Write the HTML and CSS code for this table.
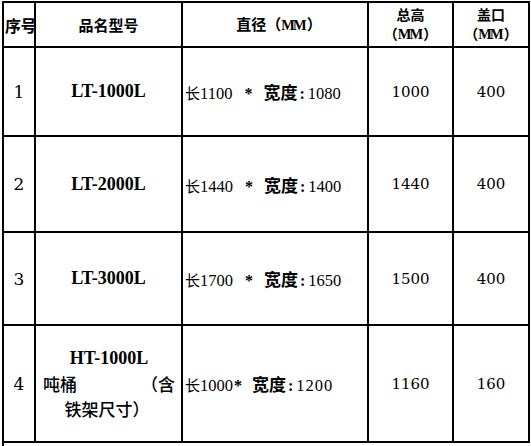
FILE: index.html
```html
<!DOCTYPE html>
<html lang="zh">
<head>
<meta charset="utf-8">
<link rel="stylesheet" href="styles.css">
</head>
<body>
<table class="spec">
  <colgroup>
    <col class="c-no">
    <col class="c-name">
    <col class="c-dim">
    <col class="c-h">
    <col class="c-lid">
  </colgroup>
  <tr class="head">
    <th class="h-no">序号</th>
    <th>品名型号</th>
    <th class="h-dim">直径（<span class="mm">MM</span>）</th>
    <th class="h-two">总高<br>（<span class="mm">MM</span>）</th>
    <th class="h-two">盖口<br>（<span class="mm">MM</span>）</th>
  </tr>
  <tr class="r1">
    <td class="no">1</td>
    <td class="model">LT-1000L</td>
    <td class="dim">长<span class="d">1100</span><span class="star">*</span><span class="b">宽度</span><span class="colon">:</span><span class="d">1080</span></td>
    <td class="num">1000</td>
    <td class="num">400</td>
  </tr>
  <tr class="r2">
    <td class="no">2</td>
    <td class="model">LT-2000L</td>
    <td class="dim">长<span class="d">1440</span><span class="star">*</span><span class="b">宽度</span><span class="colon">:</span><span class="d">1400</span></td>
    <td class="num">1440</td>
    <td class="num">400</td>
  </tr>
  <tr class="r3">
    <td class="no">3</td>
    <td class="model">LT-3000L</td>
    <td class="dim">长<span class="d">1700</span><span class="star">*</span><span class="b">宽度</span><span class="colon">:</span><span class="d">1650</span></td>
    <td class="num">1500</td>
    <td class="num">400</td>
  </tr>
  <tr class="r4">
    <td class="no">4</td>
    <td class="model multi">
      <div class="m-line">HT-1000L</div>
      <div class="m-split"><span>吨桶</span><span>（含</span></div>
      <div class="m-line cjk">铁架尺寸）</div>
    </td>
    <td class="dim">长<span class="d">1000</span><span class="star tight">*</span><span class="b">宽度</span><span class="colon">:</span><span class="d wide">1200</span></td>
    <td class="num">1160</td>
    <td class="num">160</td>
  </tr>
  <tr class="tail">
    <td colspan="5"></td>
  </tr>
</table>
</body>
</html>
```
FILE: styles.css
```css
html, body {
  margin: 0;
  padding: 0;
  background: #ffffff;
}
body {
  width: 531px;
  height: 446px;
  overflow: hidden;
  color: #000;
  font-family: "Liberation Serif", "Noto Sans CJK SC", serif;
}
.spec {
  border-collapse: collapse;
  table-layout: fixed;
  width: 528px;
  margin: 1px 0 0 2px;
}
.c-no { width: 32px; }
.c-name { width: 147px; }
.c-dim { width: 186px; }
.c-h { width: 85px; }
.c-lid { width: 76px; }

.spec th, .spec td {
  border: 2px solid #000;
  padding: 0;
  vertical-align: middle;
  box-sizing: border-box;
}
.head th {
  height: 45px;
  font-family: "Noto Sans CJK SC", sans-serif;
  font-weight: 700;
  font-size: 15px;
  line-height: 18px;
  text-align: center;
}
.head .h-no {
  text-align: left;
  padding-left: 1px;
  white-space: nowrap;
  overflow: hidden;
  font-size: 16px;
  letter-spacing: -0.5px;
}
.head .h-dim {
  padding-left: 8px;
}
.head .h-two {
  font-size: 14px;
  line-height: 19px;
}
.mm {
  font-family: "Liberation Serif", serif;
  font-weight: 700;
  font-size: 14.5px;
  letter-spacing: -2px;
  margin-right: 2px;
}
.r1 td { height: 89px; }
.r2 td { height: 96px; }
.r3 td { height: 93px; }
.r4 td { height: 117px; }
.no {
  text-align: center;
  font-family: "DejaVu Serif", serif;
  font-size: 17px;
}
.model {
  text-align: center;
  font-family: "Liberation Serif", serif;
  font-weight: 700;
  font-size: 18px;
}
.multi {
  padding: 0 6px 0 7px !important;
  line-height: 25px;
}
.m-line { text-align: center; }
.m-split {
  display: flex;
  justify-content: space-between;
  font-family: "Noto Sans CJK SC", sans-serif;
  font-weight: 500;
  font-size: 17px;
}
.cjk {
  font-family: "Noto Sans CJK SC", sans-serif;
  font-weight: 500;
  font-size: 17px;
  padding-right: 4px;
}
.dim {
  padding-left: 2px !important;
  font-family: "Noto Sans CJK SC", sans-serif;
  font-size: 15px;
  white-space: nowrap;
}
.d {
  font-family: "Liberation Serif", serif;
  font-size: 16.5px;
}
.d.wide {
  letter-spacing: 1px;
}
.star {
  font-family: "Liberation Serif", serif;
  font-weight: 700;
  font-size: 16px;
  margin: 0 11px 0 12px;
}
.star.tight {
  margin: 0 10px 0 1px;
}
.colon {
  font-family: "Liberation Serif", serif;
  font-weight: 700;
  font-size: 16px;
  margin: 0 3px 0 2px;
}
.b {
  font-family: "Noto Sans CJK SC", sans-serif;
  font-weight: 700;
  font-size: 17px;
}
.num {
  text-align: center;
  font-family: "DejaVu Serif", serif;
  font-size: 15px;
}
.tail td {
  height: 10px;
  border-right: none;
  border-bottom: none;
}
```
